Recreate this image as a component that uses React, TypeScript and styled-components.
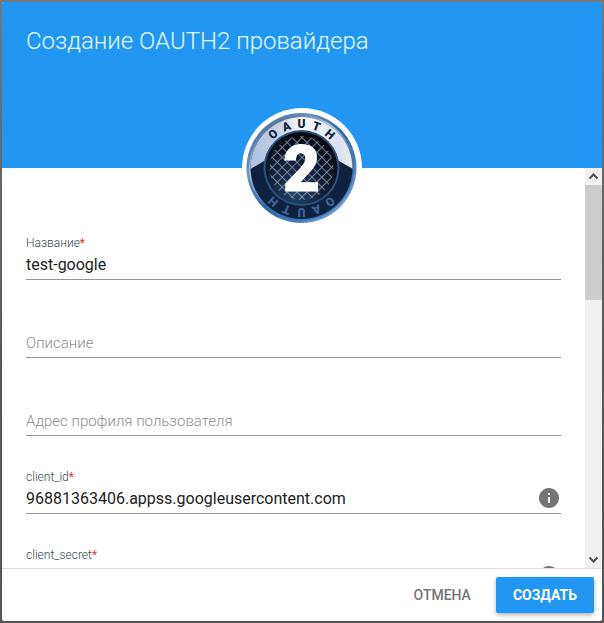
import React, { useId, useRef, useState } from "react";
import styled, { createGlobalStyle } from "styled-components";

const GlobalStyle = createGlobalStyle`
  *, *::before, *::after { box-sizing: border-box; }
  body {
    margin: 0;
    font-family: Roboto, "Liberation Sans", sans-serif;
    color: #212121;
  }
`;

const Backdrop = styled.main`
  height: 100vh;
  padding: 2px;
  display: flex;
  background: linear-gradient(#777, #666 30%, #585858 60%, #555);
`;

const Dialog = styled.section`
  flex: 1;
  min-width: 0;
  display: flex;
  flex-direction: column;
  border-radius: 2px;
  overflow: hidden;
  background: #fff;
`;

const Header = styled.header`
  position: relative;
  z-index: 1;
  flex: none;
  height: 166px;
  padding: 24px;
  background: #2196f3;
`;

const Title = styled.h1`
  margin: 0;
  font-size: 24px;
  line-height: 30px;
  font-weight: 300;
  color: #e4fbff;
`;

const Avatar = styled.div`
  position: absolute;
  left: 50%;
  bottom: 0;
  width: 120px;
  height: 120px;
  transform: translate(-50%, 50%);
  border-radius: 50%;
  background: #fff;
  svg { display: block; }
`;

const Body = styled.div`
  flex: 1;
  min-height: 0;
  display: flex;
`;

const Form = styled.form`
  flex: 1;
  min-width: 0;
  overflow-y: auto;
  scrollbar-width: none;
  padding: 68px 24px 0;
  display: flex;
  flex-direction: column;
  gap: 34px;
  &::after {
    content: "";
    flex: none;
    height: 600px;
  }
`;

const FieldBox = styled.div`
  flex: none;
  height: 44px;
  display: flex;
  flex-direction: column;
  justify-content: space-between;
  border-bottom: 1px solid #949494;
`;

const Label = styled.label`
  font-size: 12px;
  line-height: 14px;
  font-weight: 300;
  color: #37474f;
`;

const Star = styled.span`
  color: #e53935;
  font-weight: 400;
`;

const InputRow = styled.div`
  display: flex;
  align-items: center;
  height: 28px;
  padding-bottom: 2px;
`;

const Input = styled.input`
  flex: 1;
  min-width: 0;
  height: 26px;
  padding: 0;
  border: 0;
  outline: 0;
  background: transparent;
  font: 400 16px/24px Roboto, "Liberation Sans", sans-serif;
  color: #212121;
  &::placeholder {
    color: #8e8e8e;
    font-size: 15px;
    font-weight: 300;
    opacity: 1;
  }
`;

const IconButton = styled.button`
  width: 24px;
  height: 24px;
  padding: 0;
  border: 0;
  background: none;
  color: #757575;
  cursor: pointer;
  svg { display: block; }
`;

const Scrollbar = styled.div`
  flex: none;
  width: 17px;
  display: flex;
  flex-direction: column;
  background: #f0f0f0;
`;

const ScrollButton = styled.button`
  flex: none;
  height: 17px;
  padding: 0;
  border: 0;
  background: #f0f0f0;
  svg { display: block; }
`;

const Track = styled.div`
  flex: 1;
  min-height: 0;
`;

const Thumb = styled.div`
  height: 115px;
  background: #cdcdcd;
`;

const Footer = styled.footer`
  flex: none;
  display: flex;
  justify-content: flex-end;
  gap: 8px;
  padding: 8px;
  border-top: 1px solid #dcdcdc;
`;

const Button = styled.button<{ $primary?: boolean }>`
  height: 36px;
  padding: 0 17px;
  border: 0;
  border-radius: 2px;
  font: ${(p) => (p.$primary ? 700 : 500)} 14px/36px Roboto, "Liberation Sans", sans-serif;
  text-transform: uppercase;
  color: ${(p) => (p.$primary ? "#fff" : "#757575")};
  background: ${(p) => (p.$primary ? "#2196f3" : "transparent")};
  box-shadow: ${(p) => (p.$primary ? "0 2px 4px rgba(0, 0, 0, 0.3)" : "none")};
  cursor: pointer;
`;

const ringLetters = [
  { char: "O", angle: -40 },
  { char: "A", angle: -20 },
  { char: "U", angle: 0 },
  { char: "T", angle: 20 },
  { char: "H", angle: 40 },
];

function OAuthLogo() {
  return (
    <svg width="120" height="120" viewBox="0 0 120 120" role="img" aria-label="OAUTH 2">
      <defs>
        <linearGradient id="rim" x1="0" y1="0" x2="1" y2="1">
          <stop offset="0" stopColor="#2f6aa8" />
          <stop offset="0.3" stopColor="#6c93bb" />
          <stop offset="0.5" stopColor="#2e67a6" />
          <stop offset="0.7" stopColor="#4579b4" />
          <stop offset="1" stopColor="#a3c3e6" />
        </linearGradient>
        <linearGradient id="bevel" x1="0" y1="0" x2="0.600" y2="1">
          <stop offset="0" stopColor="#16345a" />
          <stop offset="0.4" stopColor="#b7cde6" />
          <stop offset="0.7" stopColor="#3a6fae" />
          <stop offset="1" stopColor="#3d76ba" />
        </linearGradient>
        <linearGradient id="silver" x1="0" y1="0" x2="1" y2="0">
          <stop offset="0" stopColor="#a3b9d8" />
          <stop offset="0.3" stopColor="#c4d2e8" />
          <stop offset="0.5" stopColor="#fbfcff" />
          <stop offset="0.8" stopColor="#d9e1ee" />
          <stop offset="1" stopColor="#f0f4fa" />
        </linearGradient>
        <radialGradient id="core" cx="0.4" cy="0.85" r="0.850">
          <stop offset="0" stopColor="#21436b" />
          <stop offset="0.5" stopColor="#0f1e35" />
          <stop offset="1" stopColor="#04070e" />
        </radialGradient>
        <pattern id="mesh" width="7" height="7" patternUnits="userSpaceOnUse" patternTransform="rotate(45 60 60)">
          <path d="M0 3.500H7M3.500 0V7" stroke="#7f90a6" strokeWidth="0.900" />
        </pattern>
        <clipPath id="ring">
          <circle cx="59.500" cy="60" r="51" />
        </clipPath>
      </defs>
      <circle cx="59.500" cy="60" r="55" fill="url(#rim)" />
      <circle cx="59.500" cy="60" r="52.500" fill="url(#bevel)" />
      <circle cx="59.500" cy="60" r="51" fill="#0e2240" />
      <g clipPath="url(#ring)">
        <path d="M0 0H120V66L97 53H22L0 66Z" fill="url(#silver)" />
      </g>
      <circle cx="59.500" cy="60" r="38" fill="#2a527f" />
      <circle cx="59.500" cy="60" r="36" fill="url(#core)" />
      <circle cx="59.500" cy="60" r="32" fill="url(#mesh)" />
      <g fontFamily="Roboto, sans-serif" fontSize="12" fontWeight="900" textAnchor="middle">
        {ringLetters.map(({ char, angle }) => (
          <text key={char} x="59.500" y="20" fill="#14233c" transform={`rotate(${angle} 59.500 60)`}>
            {char}
          </text>
        ))}
        {ringLetters.map(({ char, angle }) => (
          <text key={char} x="59.500" y="20" fill="#3c6596" transform={`rotate(${angle + 180} 59.500 60)`}>
            {char}
          </text>
        ))}
        <text x="59.500" y="83" fill="#fff" stroke="#fff" strokeWidth="1" fontSize="64">2</text>
      </g>
    </svg>
  );
}

function InfoIcon() {
  return (
    <svg width="24" height="24" viewBox="0 0 24 24" fill="currentColor" aria-hidden="true">
      <path d="M12 2C6.480 2 2 6.480 2 12s4.480 10 10 10 10-4.480 10-10S17.520 2 12 2zm1 15h-2v-6h2v6zm0-8h-2V7h2v2z" />
    </svg>
  );
}

function Chevron({ down = false }: { down?: boolean }) {
  return (
    <svg width="17" height="17" viewBox="0 0 17 17" fill="none" stroke="#505050" strokeWidth="2" aria-hidden="true">
      <path d={down ? "M4.500 6.500L8.500 10.500L12.500 6.500" : "M4.500 10.500L8.500 6.500L12.500 10.500"} />
    </svg>
  );
}

type FieldProps = {
  label: string;
  initial?: string;
  required?: boolean;
  info?: boolean;
};

function Field({ label, initial = "", required, info }: FieldProps) {
  const id = useId();
  const [value, setValue] = useState(initial);
  return (
    <FieldBox>
      {required ? (
        <Label htmlFor={id}>
          {label}
          <Star>*</Star>
        </Label>
      ) : (
        <span />
      )}
      <InputRow>
        <Input
          id={id}
          value={value}
          required={required}
          aria-label={label}
          placeholder={required ? undefined : label}
          onChange={(e) => setValue(e.target.value)}
        />
        {info && (
          <IconButton type="button" aria-label="Информация">
            <InfoIcon />
          </IconButton>
        )}
      </InputRow>
    </FieldBox>
  );
}

export default function App() {
  const form = useRef<HTMLFormElement>(null);
  const track = useRef<HTMLDivElement>(null);
  const [offset, setOffset] = useState(0);

  const onScroll = () => {
    if (!form.current || !track.current) return;
    const range = form.current.scrollHeight - form.current.clientHeight;
    const room = track.current.clientHeight - 115;
    setOffset(range > 0 ? (form.current.scrollTop / range) * room : 0);
  };
  const step = (dy: number) => form.current?.scrollBy({ top: dy });

  return (
    <>
      <GlobalStyle />
      <Backdrop>
        <Dialog role="dialog" aria-labelledby="dialog-title">
          <Header>
            <Title id="dialog-title">Создание OAUTH2 провайдера</Title>
            <Avatar>
              <OAuthLogo />
            </Avatar>
          </Header>
          <Body>
            <Form id="provider" ref={form} onScroll={onScroll} onSubmit={(e) => e.preventDefault()}>
              <Field label="Название" initial="test-google" required />
              <Field label="Описание" />
              <Field label="Адрес профиля пользователя" />
              <Field label="client_id" initial="96881363406.appss.googleusercontent.com" required info />
              <Field label="client_secret" required info />
            </Form>
            <Scrollbar>
              <ScrollButton type="button" aria-label="Вверх" onClick={() => step(-40)}>
                <Chevron />
              </ScrollButton>
              <Track ref={track}>
                <Thumb style={{ marginTop: offset }} />
              </Track>
              <ScrollButton type="button" aria-label="Вниз" onClick={() => step(40)}>
                <Chevron down />
              </ScrollButton>
            </Scrollbar>
          </Body>
          <Footer>
            <Button type="button">Отмена</Button>
            <Button type="submit" form="provider" $primary>Создать</Button>
          </Footer>
        </Dialog>
      </Backdrop>
    </>
  );
}
